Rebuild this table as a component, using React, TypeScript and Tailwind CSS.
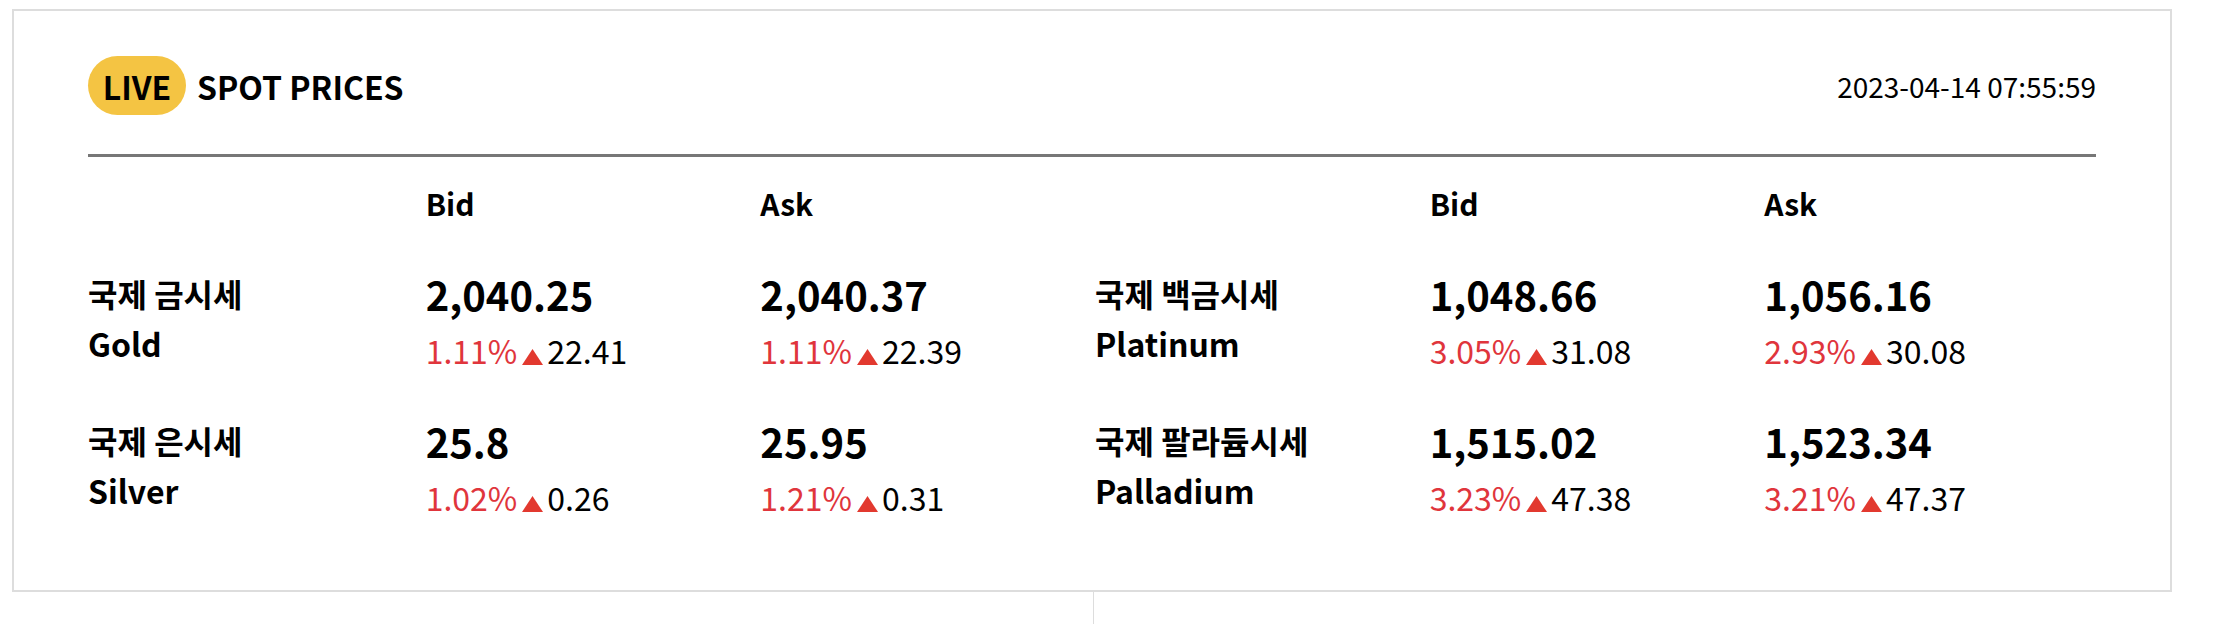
import React from "react";

const FONT = { fontFamily: '"Noto Sans CJK KR", "Noto Sans", sans-serif' };

type Quote = { price: string; pct: string; diff: string };
type Metal = { ko: string; en: string; bid: Quote; ask: Quote };

const left: Metal[] = [
  {
    ko: "국제 금시세",
    en: "Gold",
    bid: { price: "2,040.25", pct: "1.11%", diff: "22.41" },
    ask: { price: "2,040.37", pct: "1.11%", diff: "22.39" },
  },
  {
    ko: "국제 은시세",
    en: "Silver",
    bid: { price: "25.8", pct: "1.02%", diff: "0.26" },
    ask: { price: "25.95", pct: "1.21%", diff: "0.31" },
  },
];

const right: Metal[] = [
  {
    ko: "국제 백금시세",
    en: "Platinum",
    bid: { price: "1,048.66", pct: "3.05%", diff: "31.08" },
    ask: { price: "1,056.16", pct: "2.93%", diff: "30.08" },
  },
  {
    ko: "국제 팔라듐시세",
    en: "Palladium",
    bid: { price: "1,515.02", pct: "3.23%", diff: "47.38" },
    ask: { price: "1,523.34", pct: "3.21%", diff: "47.37" },
  },
];

function Up() {
  return (
    <svg width="21" height="16" viewBox="0 0 21 16" className="ml-[5px] mr-[4px] self-end mb-[9px]">
      <polygon points="10.5,0 21,16 0,16" fill="#e2392f" />
    </svg>
  );
}

function QuoteCell({ q }: { q: Quote }) {
  return (
    <div className="flex flex-col">
      <div className="text-[40px] font-bold leading-[64px] text-black">{q.price}</div>
      <div className="flex items-end text-[32px] leading-[48px]">
        <span className="text-[#e0353c]">{q.pct}</span>
        <Up />
        <span className="text-black">{q.diff}</span>
      </div>
    </div>
  );
}

function Label({ m }: { m: Metal }) {
  return (
    <div className="pt-[6px] text-[32px] font-bold leading-[50px] text-black">
      <div>{m.ko}</div>
      <div>{m.en}</div>
    </div>
  );
}

function Head({ t }: { t: string }) {
  return <div className="pl-[3px] text-[30px] font-bold leading-[44px] text-black">{t}</div>;
}

export default function App() {
  const rows = [0, 1];
  return (
    <div className="min-h-[624px] bg-white" style={FONT}>
      <div className="ml-[12px] mt-[9px] w-[2160px] border-2 border-[#dddddd] px-[74px] pt-[45px] pb-[69px]">
        <div className="flex h-[59px] items-center justify-between">
          <div className="flex items-center">
            <div className="flex h-[59px] w-[98px] items-center justify-center rounded-full bg-[#f4c443] text-[32px] font-bold text-black">
              LIVE
            </div>
            <div className="ml-[11px] text-[32px] font-bold text-black">SPOT PRICES</div>
          </div>
          <div className="text-[28px] text-black">2023-04-14 07:55:59</div>
        </div>
        <div className="mt-[39px] h-[3px] bg-[#777777]" />
        <div className="mt-[24px] grid grid-cols-6">
          <div />
          <Head t="Bid" />
          <Head t="Ask" />
          <div />
          <Head t="Bid" />
          <Head t="Ask" />
        </div>
        <div className="mt-[37px] flex flex-col gap-[35px]">
          {rows.map((i) => (
            <div key={i} className="grid grid-cols-6 items-start">
              <Label m={left[i]} />
              <div className="pl-[3px]">
                <QuoteCell q={left[i].bid} />
              </div>
              <div className="pl-[3px]">
                <QuoteCell q={left[i].ask} />
              </div>
              <div className="pl-[3px]">
                <Label m={right[i]} />
              </div>
              <div className="pl-[3px]">
                <QuoteCell q={right[i].bid} />
              </div>
              <div className="pl-[3px]">
                <QuoteCell q={right[i].ask} />
              </div>
            </div>
          ))}
        </div>
      </div>
      <div className="ml-[1093px] h-[33px] w-px bg-[#dddddd]" />
    </div>
  );
}
